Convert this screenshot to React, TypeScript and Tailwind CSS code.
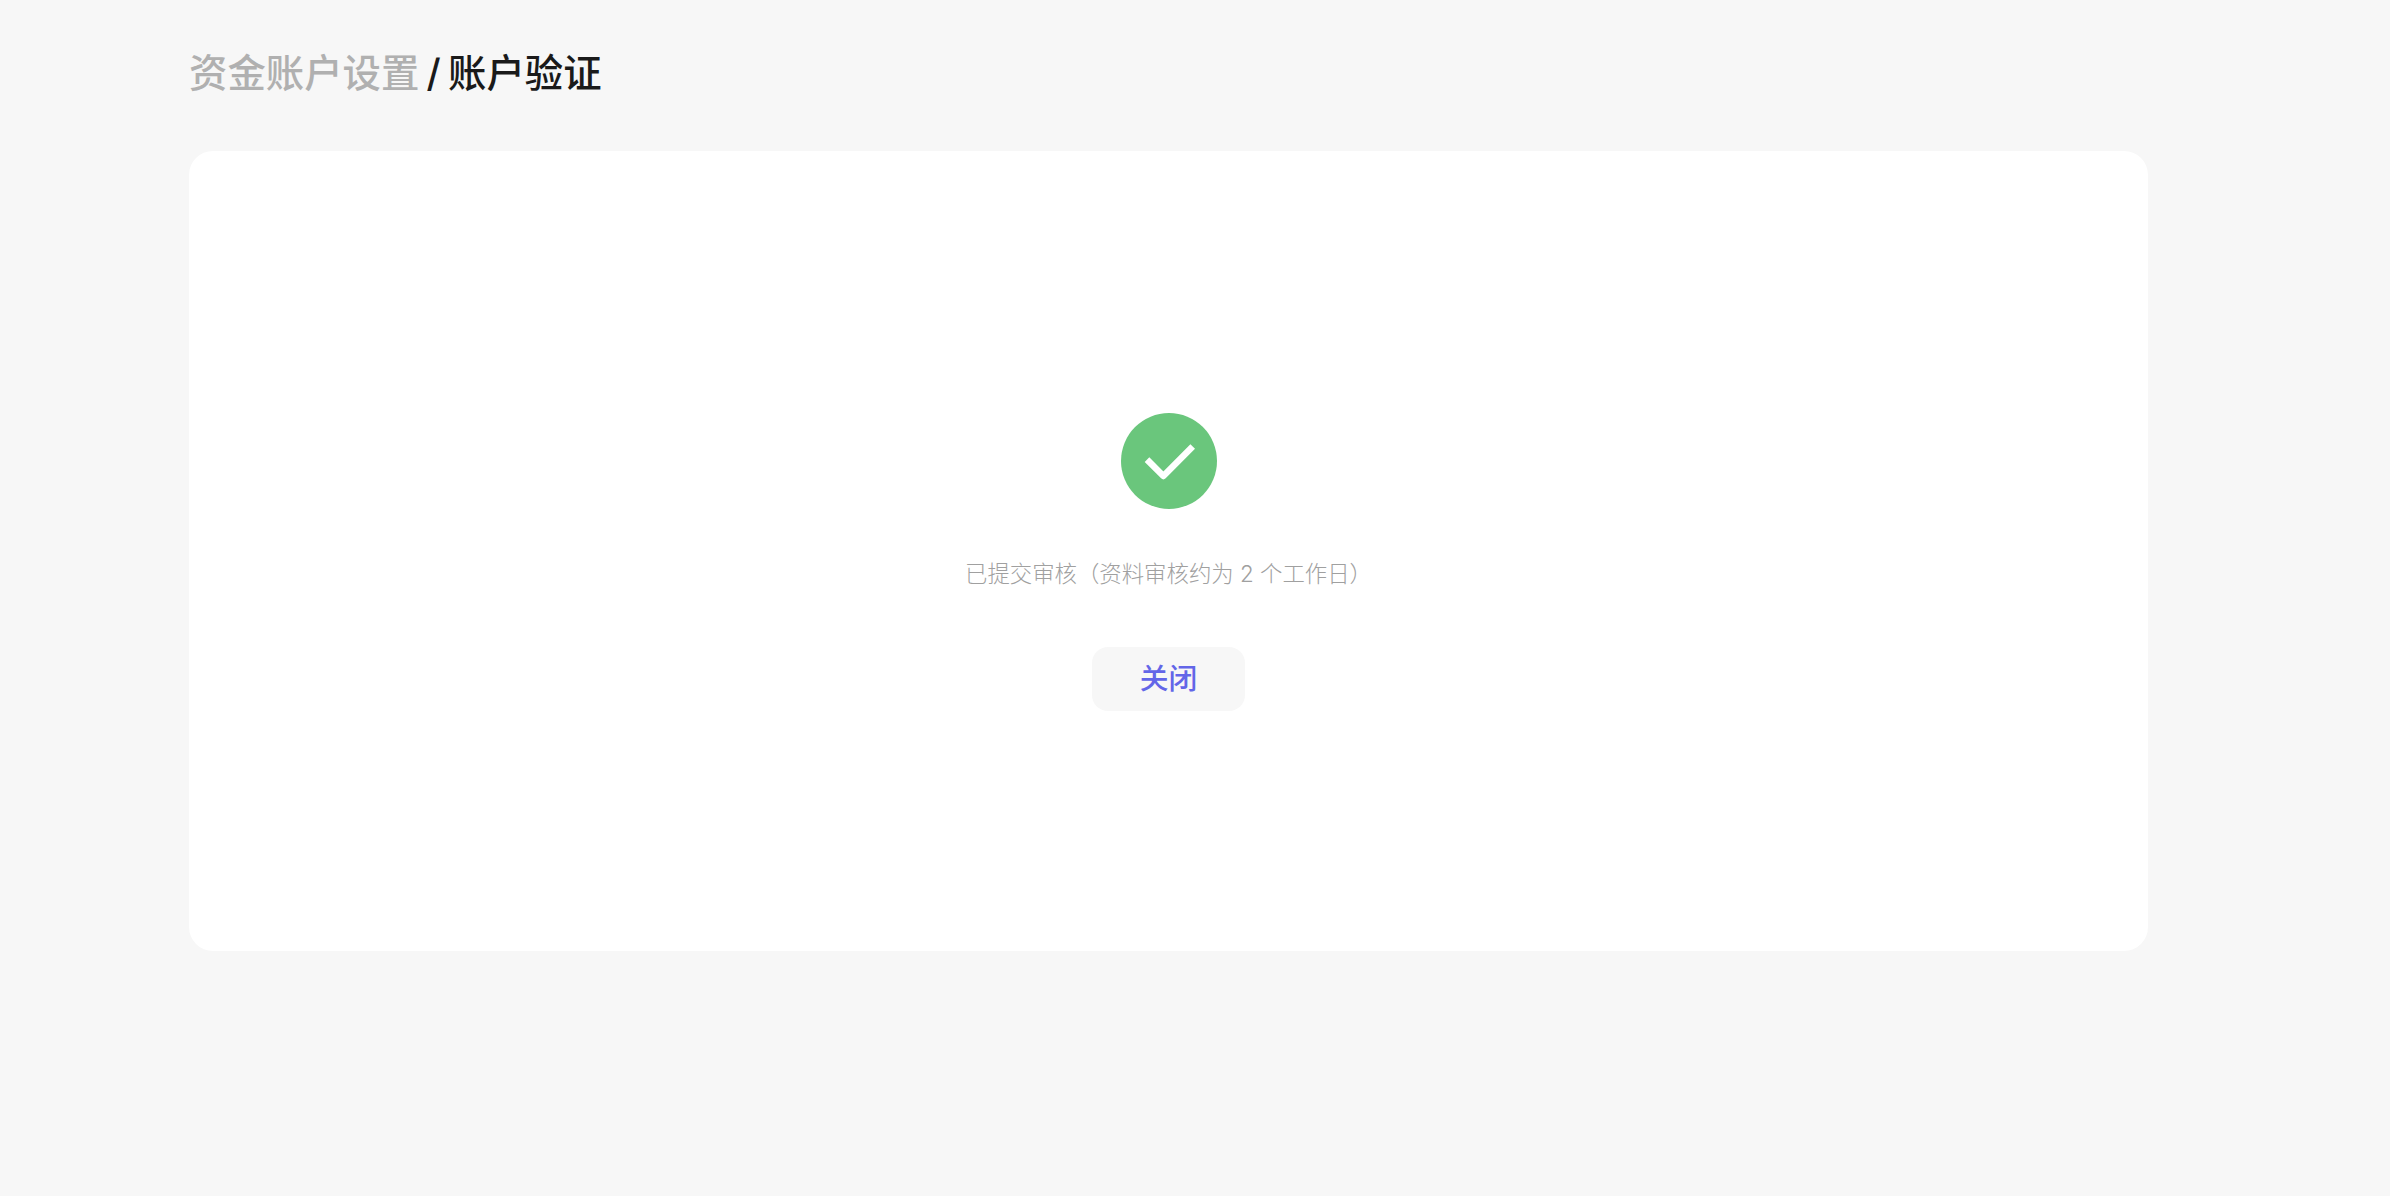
export default function App() {
  return (
    <div className="min-h-[1196px] bg-[#f7f7f7] pl-[189px] pr-[242px] pt-[44px] font-['Inter','Noto_Sans_CJK_SC',sans-serif]">
      <h1 className="h-[58px] text-[38.4px] leading-[58px] font-medium text-[#1a1a1a] whitespace-nowrap [word-spacing:-3px]">
        <span className="text-[#b0b0b0]">资金账户设置</span> / 账户验证
      </h1>
      <main className="mt-[49px] flex h-[800px] flex-col items-center rounded-[24px] bg-white pt-[262px]">
        <div className="flex h-[96px] w-[96px] items-center justify-center rounded-full bg-[#6ac67c]">
          <svg width="96" height="96" viewBox="0 0 96 96" fill="none">
            <path d="M26 46.6L42.4 63L71.7 33.5" stroke="#ffffff" strokeWidth="6.5" strokeLinejoin="round" />
          </svg>
        </div>
        <p className="mt-[49px] h-[32px] text-[22.4px] leading-[32px] font-light text-[#a0a0a0] whitespace-nowrap">
          已提交审核（资料审核约为 2 个工作日）
        </p>
        <button className="mt-[57px] h-[64px] w-[153px] rounded-[16px] bg-[#f7f7f7] text-[28.8px] font-medium text-[#6366e8]">
          关闭
        </button>
      </main>
    </div>
  );
}
